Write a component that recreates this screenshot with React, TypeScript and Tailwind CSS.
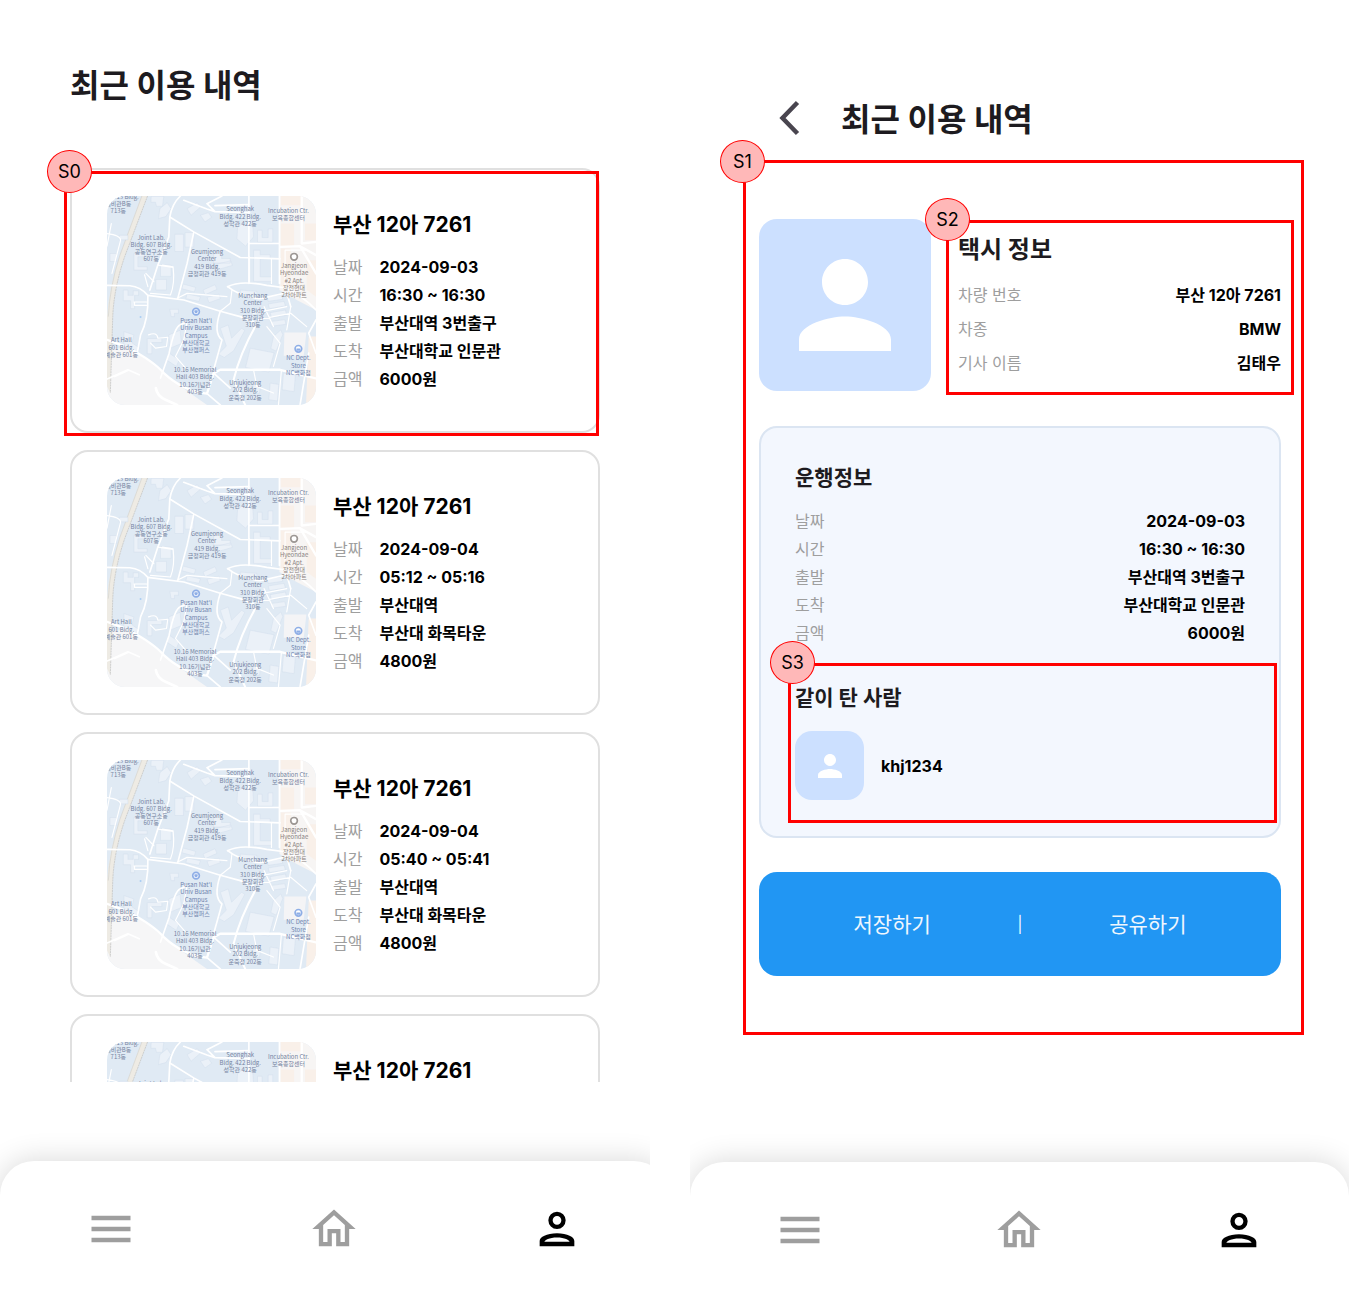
import React from "react";

type Ride = { plate: string; date: string; time: string; from: string; to: string; fare: string };

const rides: Ride[] = [
  { plate: "부산 12아 7261", date: "2024-09-03", time: "16:30 ~ 16:30", from: "부산대역 3번출구", to: "부산대학교 인문관", fare: "6000원" },
  { plate: "부산 12아 7261", date: "2024-09-04", time: "05:12 ~ 05:16", from: "부산대역", to: "부산대 화목타운", fare: "4800원" },
  { plate: "부산 12아 7261", date: "2024-09-04", time: "05:40 ~ 05:41", from: "부산대역", to: "부산대 화목타운", fare: "4800원" },
  { plate: "부산 12아 7261", date: "2024-09-04", time: "05:40 ~ 05:41", from: "부산대역", to: "부산대 화목타운", fare: "4800원" },
];

const rideRows = (r: Ride): [string, string][] => [
  ["날짜", r.date],
  ["시간", r.time],
  ["출발", r.from],
  ["도착", r.to],
  ["금액", r.fare],
];

const taxiRows: [string, string][] = [
  ["차량 번호", "부산 12아 7261"],
  ["차종", "BMW"],
  ["기사 이름", "김태우"],
];

const mapLabels: { x: number; y: number; color: string; lines: string[] }[] = [
  { x: 256, y: 176, color: "#7482a0", lines: ["513 Bldg."] },
  { x: 233, y: 197, color: "#7482a0", lines: ["예비관B동", "713동"] },
  { x: 332, y: 298, color: "#7482a0", lines: ["Joint Lab.", "Bldg. 607 Bldg.", "공동연구소동", "607동"] },
  { x: 600, y: 213, color: "#7482a0", lines: ["Seonghak", "Bldg. 422 Bldg.", "성학관 422동"] },
  { x: 745, y: 218, color: "#7482a0", lines: ["Incubation Ctr.", "보육종합센터"] },
  { x: 500, y: 342, color: "#7482a0", lines: ["Geumjeong", "Center", "419 Bldg.", "금정회관 419동"] },
  { x: 762, y: 384, color: "#877f7c", lines: ["Jangjeon", "Hyeondae", "#2 Apt.", "장전현대", "2차아파트"] },
  { x: 638, y: 474, color: "#7482a0", lines: ["Munchang", "Center", "310 Bldg.", "문창회관", "310동"] },
  { x: 467, y: 549, color: "#6f83ad", lines: ["Pusan Nat'l", "Univ Busan", "Campus", "부산대학교", "부산캠퍼스"] },
  { x: 242, y: 607, color: "#7482a0", lines: ["Art Hall", "601 Bldg.", "예술관 601동"] },
  { x: 464, y: 697, color: "#7482a0", lines: ["10.16 Memorial", "Hall 403 Bldg.", "10.16기념관", "403동"] },
  { x: 615, y: 736, color: "#7482a0", lines: ["Unjukjeong", "202 Bldg.", "운죽정 202동"] },
  { x: 775, y: 662, color: "#6f83ad", lines: ["NC Dept.", "Store", "NC백화점"] },
];

function CampusMap() {
  return (
    <svg viewBox="199 167 629 629" className="size-[209px] shrink-0 rounded-[18px]" role="img" aria-label="지도">
      <rect x="199" y="167" width="629" height="629" fill="#e0eaf4" />
      <path d="M199 630 L262 622 L330 668 L382 712 L470 775 L500 796 H199 Z" fill="#f6f6f7" />
      <path d="M720 167 H828 V510 L770 480 L718 450 Z" fill="#f7f5f4" />
      <path d="M722 167 h66 v28 h-66z M722 250 h40 v70 h-40z M722 325 h30 v115 h-30z M800 360 h28 v110 l-28 -20z M806 590 h22 v206 h-30z M795 250 h33 v50 h-33z" fill="#f9f0e9" />
      <path d="M733 578 h66 l-8 70 h-60z" fill="#f4f4f6" />
      <path d="M303 167 H321 L252 350 Q218 450 216 540 L209 760 L199 740 V530 Q204 450 238 345 Z" fill="#eeebe4" />
      <path d="M321 167 L252 350 Q218 450 216 540 L209 760" fill="none" stroke="#c6c7c8" strokeWidth="2.5" strokeDasharray="6 2" />
      <path d="M304 167 L238 345 Q207 440 203 530" fill="none" stroke="#d3d3cf" strokeWidth="2" />
      {/* building footprints */}
      <g fill="#ebf1f8" stroke="#d3dfec" strokeWidth="1.5">
        <path d="M332 168 h38 l-4 30 h-18 l-3 -12 h-14z" />
        <path d="M358 205 l22 -18 12 18 -16 24 -22 6z" />
        <path d="M440 205 l30 -18 12 12 -30 26z M480 225 l24 -8 10 14 -20 14z" />
        <path d="M592 262 l16 -14 30 12 2 30 -24 28 -26 -22z" />
        <path d="M403 282 h26 v52 h-26z M434 277 h26 v44 h-26z" />
        <path d="M280 340 h32 v10 h-20 v30 h28 v10 h-40z" />
        <path d="M360 375 h32 v34 h-32z M346 418 h32 v32 h-32z" />
        <path d="M248 450 h14 v16 h16 v-14 h16 v14 h-12 v40 h-12 v-24 h-22z" />
        <path d="M428 432 l38 10 -4 14 -38 -10z M440 462 l40 8 -4 14 -40 -8z M488 450 l36 -16 6 14 -36 16z M500 472 l36 -10 4 14 -34 12z" />
        <path d="M640 330 h20 v14 h30 v12 h-30 v54 h34 v14 h-54z" />
        <path d="M652 270 h14 v22 h18 v-26 h14 v40 h-46z" />
        <path d="M520 335 h24 v20 h26 v14 h-50z M530 372 l42 -10 4 14 -42 12z" />
        <path d="M600 450 l50 4 v14 l-50 -4z M680 470 l44 -6 4 14 -44 6z M684 492 l48 -8 4 14 -48 8z M690 518 l46 -8 4 16 -46 8z M690 545 l44 -6 4 14 -44 6z" />
        <path d="M540 565 l24 -10 10 40 30 -30 10 6 -34 62 -28 20 -18 -10 24 -24z" />
        <path d="M630 625 l72 14 -16 58 -70 -14z" />
        <path d="M700 590 l22 -20 6 14 -20 50 -16 -8z" />
        <path d="M250 575 l30 10 -6 24 24 16 -8 12 -40 -24z M320 596 h44 v12 h-30 v34 h-14z" />
        <path d="M385 585 l34 -14 4 40 -34 14z M386 640 l30 20 -8 20 -30 -20z" />
        <path d="M640 725 l22 6 -4 30 -22 -4z M690 730 l26 4 -4 50 -26 -4z M730 700 l36 6 -4 50 -36 -6z" />
        <path d="M388 508 h26 v12 h-12 v10 h-10z M236 285 h26 v14 h-26z M208 340 h20 v24 h-20z" />
      </g>
      {/* roads */}
      <g fill="none" stroke="#fff" strokeLinecap="round" strokeLinejoin="round">
        <g strokeWidth="5">
          <path d="M199 436 L268 437 Q300 440 322 466 L430 480 L540 514 L600 530 L640 545" />
          <path d="M420 167 Q395 190 388 230 L460 275 L600 352 L720 356" />
          <path d="M388 230 L385 290 L352 375 L328 450" />
          <path d="M460 277 L440 370 L412 475" />
          <path d="M430 180 L500 206 L524 214 L628 217 M524 196 L626 193 M524 214 L500 190 L545 167" />
          <path d="M626 167 V430 M626 310 H718 M718 167 V430" />
          <path d="M562 440 Q600 420 680 436 L740 444 Q790 470 828 510" />
          <path d="M562 440 Q600 470 660 476 L740 458 L752 500" />
          <path d="M322 466 Q324 540 300 585 L290 640" />
          <path d="M199 600 L260 622 Q340 665 370 700 Q430 755 500 762 L520 700 L540 690 L720 690 L828 716" strokeWidth="7" />
          <path d="M645 560 Q600 640 580 720 L615 796" strokeWidth="6" />
          <path d="M360 715 L386 640 Q402 560 420 555 L440 545" />
          <path d="M540 514 Q518 580 545 600 L520 690" />
          <path d="M720 320 L780 318 L828 345 M785 167 V310 L828 305 M780 318 L828 400" strokeWidth="7" />
          <path d="M828 540 L806 580 L828 640 M806 640 L780 796" />
          <path d="M500 762 L540 796 M520 700 L570 745" />
          <path d="M346 745 Q350 770 375 780 L410 796" strokeWidth="8" />
          <path d="M199 718 Q240 700 262 690 L296 705 M222 710 L262 692" />
        </g>
        <g strokeWidth="3.5">
          <path d="M352 375 L398 382 Q404 430 390 465 L330 460 M366 375 L398 380 M340 425 L316 400 M322 440 L312 404" />
          <path d="M199 280 Q240 285 240 300 L214 400 M199 318 L212 250" />
          <path d="M280 486 H318 M282 486 v10 h36" />
          <path d="M324 585 Q350 575 352 595 L382 592 L378 620 L345 625 L330 610" />
          <path d="M640 520 L740 500 M650 540 L752 520 M672 500 L700 560 M752 500 L740 570 M752 520 L800 560" />
          <path d="M410 475 L440 460 L560 470 M540 514 L570 490 L575 450" />
          <path d="M440 545 L430 600 L405 650 L440 690" />
          <path d="M680 560 L720 610 L700 680 M724 690 L715 796 M640 690 L650 740 L700 760" />
          <path d="M628 350 V430 M694 356 V430 M735 444 V330 H800" />
        </g>
      </g>
      <g fontFamily="'Noto Sans CJK KR', sans-serif" fontSize="18" textAnchor="middle">
        {mapLabels.map((label) =>
          label.lines.map((line, i) => (
            <text key={label.x + line} x={label.x} y={label.y + i * 22} fill={label.color}>
              {line}
            </text>
          ))
        )}
      </g>
      <circle cx="762" cy="350" r="10" fill="#fff" stroke="#9c9794" strokeWidth="5" />
      <circle cx="467" cy="515" r="10" fill="#fff" stroke="#8eaee6" strokeWidth="5" />
      <path d="M462 511 h10 v6 l-5 4 l-5 -4z" fill="#8eaee6" />
      <circle cx="775" cy="627" r="10" fill="#fff" stroke="#8eaee6" strokeWidth="5" />
      <path d="M769 626 h12 v7 h-12z" fill="#8eaee6" />
      <circle cx="300" cy="531" r="3" fill="#a9cdf2" />
    </svg>
  );
}

function Marker({ label, frame, badge }: { label: string; frame: string; badge: string }) {
  return (
    <div className={`pointer-events-none absolute z-10 border-[3px] border-[#ff0000] ${frame}`}>
      <span
        className={`absolute flex h-[43px] w-[45px] items-center justify-center rounded-[50%] border border-[#ff0000] bg-[#ffb8b8] text-lg text-black ${badge}`}
      >
        {label}
      </span>
    </div>
  );
}

function Avatar({ box, icon }: { box: string; icon: string }) {
  return (
    <div className={`flex shrink-0 items-center justify-center bg-[#cce0ff] ${box}`}>
      <svg viewBox="0 0 24 24" className={icon} fill="#fff" aria-hidden="true">
        <path d="M12 12c2.21 0 4-1.79 4-4s-1.79-4-4-4-4 1.79-4 4 1.79 4 4 4zm0 2c-2.67 0-8 1.34-8 4v2h16v-2c0-2.66-5.33-4-8-4z" />
      </svg>
    </div>
  );
}

function NavBar({ className }: { className: string }) {
  return (
    <nav className={`grid shrink-0 grid-cols-3 rounded-t-[34px] bg-white shadow-[0_0_30px_rgba(0,0,0,0.16)] ${className}`}>
      <button type="button" aria-label="메뉴" className="flex justify-center pt-[42px] text-[#9e9e9e]">
        <svg viewBox="0 0 24 24" className="size-[52px]" fill="currentColor">
          <path d="M3 18.1h18v-2.100H3v2.100zm0-5.050h18v-2.100H3v2.100zm0-7.150v2.100h18V5.900H3z" />
        </svg>
      </button>
      <button type="button" aria-label="홈" className="flex justify-center pt-[42px] text-[#9e9e9e]">
        <svg viewBox="0 0 24 24" className="size-[52px]" fill="currentColor">
          <path d="M12 5.69l5 4.5V18h-2v-6H9v6H7v-7.81l5-4.5M12 3L2 12h3v8h6v-6h2v6h6v-8h3L12 3z" />
        </svg>
      </button>
      <button type="button" aria-label="내 정보" className="flex justify-center pt-[42px] text-black">
        <svg viewBox="0 0 24 24" className="size-[52px]" fill="currentColor" fillRule="evenodd">
          <path d="M12 4a4 4 0 1 0 0 8a4 4 0 1 0 0-8zM12 6a2 2 0 1 1 0 4a2 2 0 1 1 0-4z" />
          <path d="M4 20v-2.500C4 15.8 7.2 14 12 14s8 1.8 8 3.500V20zM6.2 17.900h11.600c0-.7-2.300-2-5.800-2s-5.800 1.300-5.800 2z" />
        </svg>
      </button>
    </nav>
  );
}

function RideCard({ ride }: { ride: Ride }) {
  return (
    <li className="flex h-[265px] shrink-0 gap-[17px] rounded-[18px] border-2 border-[#e0e0e0] bg-white pt-[26px] pl-[35px]">
      <CampusMap />
      <div className="pt-[13px]">
        <h2 className="text-[21px] leading-8 font-bold text-black">{ride.plate}</h2>
        <dl className="mt-3 grid grid-cols-[auto_1fr] gap-x-[17px] text-base leading-7">
          {rideRows(ride).map(([term, value]) => (
            <React.Fragment key={term}>
              <dt className="text-[#9e9e9e]">{term}</dt>
              <dd className="font-bold whitespace-nowrap text-black">{value}</dd>
            </React.Fragment>
          ))}
        </dl>
      </div>
    </li>
  );
}

function HistoryScreen() {
  return (
    <section className="flex min-w-0 flex-[650] flex-col overflow-hidden">
      <h1 className="mt-[62px] ml-[70px] text-[32px] leading-[48px] font-bold text-[#1d1b20]">최근 이용 내역</h1>
      <div className="relative mt-[58px] mb-[79px] min-h-0 flex-1 pr-[50px] pl-[70px]">
        <ul className="flex h-full flex-col gap-[17px] overflow-hidden">
          {rides.map((ride, i) => (
            <RideCard key={i} ride={ride} />
          ))}
        </ul>
        <Marker label="S0" frame="top-[3px] right-[51px] left-[64px] h-[265px]" badge="-top-6 -left-5" />
      </div>
      <NavBar className="-mr-[18px] h-[139px]" />
    </section>
  );
}

function DetailScreen() {
  return (
    <section className="flex min-w-0 flex-[659] flex-col overflow-hidden">
      <header className="mt-[94px] ml-[88px] flex items-center gap-[39px]">
        <button type="button" aria-label="뒤로">
          <svg viewBox="0 0 24 36" className="h-9 w-6" fill="none" stroke="#49454f" strokeWidth="4.5">
            <path d="M19.5 2.5L4.5 18l15 15.500" />
          </svg>
        </button>
        <h1 className="pt-[3px] text-[32px] leading-[45px] font-bold text-[#1d1b20]">최근 이용 내역</h1>
      </header>
      <main className="relative mr-[45px] ml-[53px] pt-[77px] pr-[23px] pb-[59px] pl-4">
        <Marker label="S1" frame="top-[18px] right-0 bottom-0 left-0" badge="-top-[23px] -left-[26px]" />
        <div className="flex gap-[27px]">
          <Avatar box="size-[172px] rounded-[18px]" icon="size-[138px]" />
          <div className="relative flex-1 pt-[13px]">
            <Marker label="S2" frame="top-px -right-[13px] -left-3 h-[175px]" badge="-top-[25px] -left-6" />
            <h2 className="text-2xl leading-9 font-bold text-[#1d1b20]">택시 정보</h2>
            <dl className="mt-[10px] text-base leading-[34px]">
              {taxiRows.map(([term, value]) => (
                <div key={term} className="flex justify-between">
                  <dt className="text-[#9e9e9e]">{term}</dt>
                  <dd className="font-bold text-black">{value}</dd>
                </div>
              ))}
            </dl>
          </div>
        </div>
        <div className="mt-[35px] rounded-[18px] border-2 border-[#dbe5f2] bg-[#f3f7fe] px-[34px] pt-[34px] pb-9">
          <h2 className="text-[21px] leading-8 font-bold text-[#1d1b20]">운행정보</h2>
          <dl className="mt-[13px] text-base leading-7">
            {rideRows(rides[0]).map(([term, value]) => (
              <div key={term} className="flex justify-between">
                <dt className="text-[#9e9e9e]">{term}</dt>
                <dd className="font-bold text-black">{value}</dd>
              </div>
            ))}
          </dl>
          <div className="relative mt-[35px]">
            <Marker label="S3" frame="-top-[19px] -right-8 -left-[7px] h-[160px]" badge="-top-[25px] -left-[21px]" />
            <h2 className="text-[21px] leading-8 font-bold text-[#1d1b20]">같이 탄 사람</h2>
            <div className="mt-[17px] flex items-center gap-[17px]">
              <Avatar box="size-[69px] rounded-[17px]" icon="size-9" />
              <span className="text-base font-bold text-black">khj1234</span>
            </div>
          </div>
        </div>
        <div className="mt-[34px] flex h-[104px] items-center rounded-[18px] bg-[#2196f3] px-2 text-[21px] text-[#f0f7fe]">
          <button type="button" className="h-full flex-1 pt-0.5">저장하기</button>
          <span aria-hidden="true" className="text-base">|</span>
          <button type="button" className="h-full flex-1 pt-0.5">공유하기</button>
        </div>
      </main>
      <div className="flex-1" />
      <NavBar className="h-[138px]" />
    </section>
  );
}

export default function App() {
  return (
    <div className="flex h-screen gap-10 bg-white font-['Inter','Noto_Sans_CJK_KR',sans-serif]">
      <HistoryScreen />
      <DetailScreen />
    </div>
  );
}
